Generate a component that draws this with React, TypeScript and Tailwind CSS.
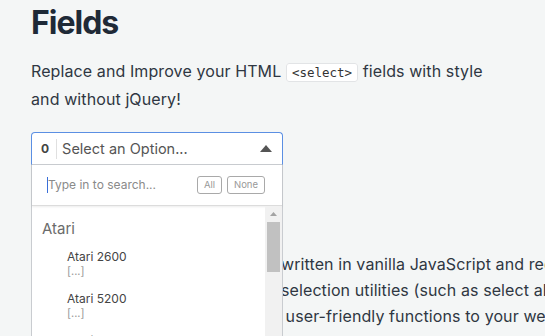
import React from "react";

const groups = [
  {
    label: "Atari",
    items: ["Atari 2600", "Atari 5200", "Atari 7800"],
  },
];

// lines of the description; the first part sits under the open dropdown
const descLines = [
  ["This lightweight select replacement is ", "written in vanilla JavaScript and requires no dependencies."],
  ["It comes with many useful multiple ", "selection utilities (such as select all / none) and adds"],
  ["and adds a lot of additional useful and", " user-friendly functions to your web forms."],
];

export default function App() {
  return (
    <div className="min-h-screen overflow-hidden bg-[#f4f6f6] px-[31px] text-[#2b3440] font-['Inter','Noto_Sans',sans-serif]">
      <h1 className="pt-[1px] text-[32px] font-bold leading-[44px] tracking-[-1px] text-[#1f2a37]">Fields</h1>
      <p className="mt-[13px] w-[462px] text-[16px] leading-[26px] tracking-[0.1px] text-[#2f3742]">
        Replace and Improve your HTML{" "}
        <code className="rounded-[3px] border border-[#e2e4e6] bg-white px-[5px] py-[1px] font-['DejaVu_Sans_Mono',monospace] text-[12.5px] tracking-normal text-[#333]">
          &lt;select&gt;
        </code>{" "}
        fields with style and without jQuery!
      </p>

      <div className="relative mt-[20px] w-[252px]">
        {/* select head */}
        <div className="flex h-[33px] items-center rounded-t-[4px] border border-[#5b8fe3] border-b-[#c9ccd0] bg-white">
          <span className="pl-[9px] pr-[7px] text-[12px] font-bold text-[#444]">0</span>
          <span className="h-[20px] border-l border-[#e0e0e0]" />
          <span className="flex-1 pl-[5px] text-[14.5px] text-[#555]">Select an Option...</span>
          <svg width="12" height="7" viewBox="0 0 12 7" className="mr-[10px]">
            <path d="M0 7 L6 0 L12 7 Z" fill="#555" />
          </svg>
        </div>

        {/* dropdown overlay */}
        <div className="absolute left-0 top-full z-10 w-[252px] border-x border-[#c9ccd0] bg-white">
          <div className="flex h-[41px] items-center border-b border-[#dcdcdc] pl-[15px] pr-[17px] shadow-[0_1px_2px_rgba(0,0,0,0.08)]">
            <span className="h-[16px] border-l border-[#3a6fd8]" />
            <span className="flex-1 text-[12px] text-[#8a8a8a]">Type in to search...</span>
            <div className="flex gap-[5px]">
              <span className="flex h-[18px] w-[25px] items-center justify-center rounded-[3px] border border-[#a9a9a9] text-[9.5px] text-[#999]">All</span>
              <span className="flex h-[18px] w-[38px] items-center justify-center rounded-[3px] border border-[#a9a9a9] text-[9.5px] text-[#999]">None</span>
            </div>
          </div>
          <div className="flex h-[140px]">
            <div className="flex-1">
              {groups.map((g) => (
                <div key={g.label}>
                  <div className="pl-[10px] pt-[13px] text-[15px] leading-[20px] text-[#6b6b6b]">{g.label}</div>
                  <div className="pt-[10px]">
                    {g.items.map((item) => (
                      <div key={item} className="h-[42px] pl-[35px]">
                        <div className="text-[12px] leading-[16px] text-[#444]">{item}</div>
                        <div className="text-[11px] leading-[12px] text-[#999]">[...]</div>
                      </div>
                    ))}
                  </div>
                </div>
              ))}
            </div>
            {/* scrollbar */}
            <div className="flex w-[17px] flex-col items-center bg-[#f1f1f1]">
              <svg width="7" height="4" viewBox="0 0 7 4" className="mt-[6px]">
                <path d="M0 4 L3.5 0 L7 4 Z" fill="#a3a3a3" />
              </svg>
              <div className="mt-[6px] h-[50px] w-[13px] bg-[#c1c1c1]" />
            </div>
          </div>
        </div>
      </div>

      {/* text partly hidden behind the dropdown */}
      <div className="mt-[86px] whitespace-nowrap text-[16px] leading-[26px] tracking-[0.1px] text-[#2f3742]">
        {descLines.map(([hidden, shown], i) => (
          <div key={i}>
            <span className="inline-block w-[250px] overflow-hidden align-bottom">{hidden}</span>
            {shown}
          </div>
        ))}
      </div>
    </div>
  );
}
